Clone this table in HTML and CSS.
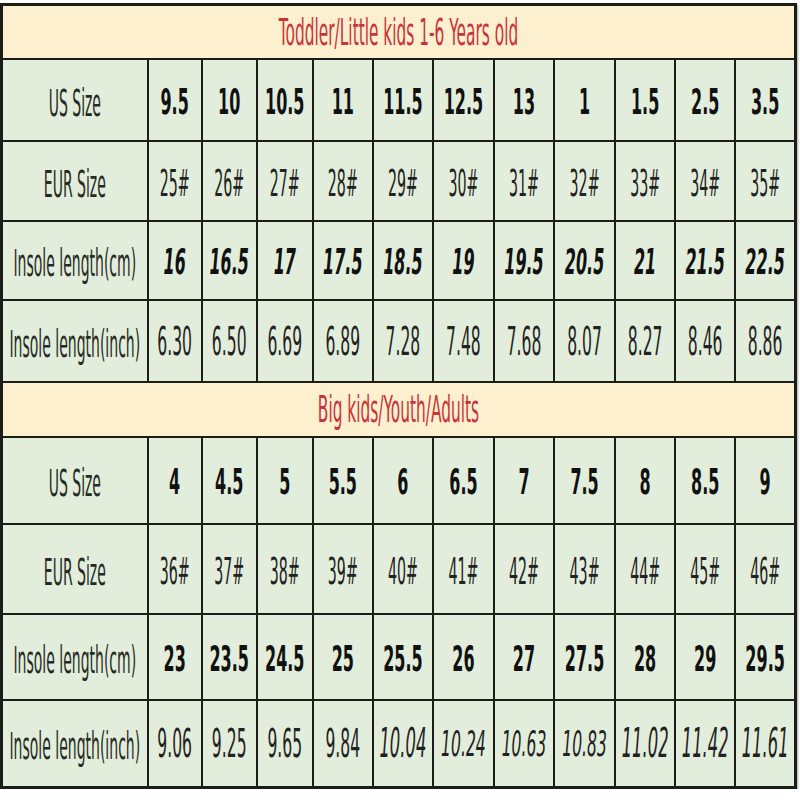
FILE: index.html
```html
<!DOCTYPE html>
<html>
<head>
<meta charset="utf-8">
<link rel="stylesheet" href="styles.css">
</head>
<body>
<table class="chart">
<colgroup>
<col class="c-label"><col class="c54"><col class="c55"><col class="c56"><col class="c60"><col class="c60"><col class="c61"><col class="c60"><col class="c61"><col class="c60"><col class="c60"><col class="c60">
</colgroup>
<tbody>
<tr class="r-title"><td colspan="12" class="title"><span class="t">Toddler/Little kids 1-6 Years old</span></td></tr>
<tr class="r82"><td class="lbl"><span class="t">US Size</span></td>
<td class="b"><span class="t">9.5</span></td><td class="b"><span class="t">10</span></td><td class="b"><span class="t">10.5</span></td><td class="b"><span class="t">11</span></td><td class="b"><span class="t">11.5</span></td><td class="b"><span class="t">12.5</span></td><td class="b"><span class="t">13</span></td><td class="b"><span class="t">1</span></td><td class="b"><span class="t">1.5</span></td><td class="b"><span class="t">2.5</span></td><td class="b"><span class="t">3.5</span></td></tr>
<tr class="r80"><td class="lbl"><span class="t">EUR Size</span></td>
<td class="e"><span class="t">25#</span></td><td class="e"><span class="t">26#</span></td><td class="e"><span class="t">27#</span></td><td class="e"><span class="t">28#</span></td><td class="e"><span class="t">29#</span></td><td class="e"><span class="t">30#</span></td><td class="e"><span class="t">31#</span></td><td class="e"><span class="t">32#</span></td><td class="e"><span class="t">33#</span></td><td class="e"><span class="t">34#</span></td><td class="e"><span class="t">35#</span></td></tr>
<tr class="r79"><td class="lbl"><span class="t">Insole length(cm)</span></td>
<td class="bi"><span class="t">16</span></td><td class="bi"><span class="t">16.5</span></td><td class="bi"><span class="t">17</span></td><td class="bi"><span class="t">17.5</span></td><td class="bi"><span class="t">18.5</span></td><td class="bi"><span class="t">19</span></td><td class="bi"><span class="t">19.5</span></td><td class="bi"><span class="t">20.5</span></td><td class="bi"><span class="t">21</span></td><td class="bi"><span class="t">21.5</span></td><td class="bi"><span class="t">22.5</span></td></tr>
<tr class="r82"><td class="lbl"><span class="t">Insole length(inch)</span></td>
<td class="n"><span class="t">6.30</span></td><td class="n"><span class="t">6.50</span></td><td class="n"><span class="t">6.69</span></td><td class="n"><span class="t">6.89</span></td><td class="n"><span class="t">7.28</span></td><td class="n"><span class="t">7.48</span></td><td class="n"><span class="t">7.68</span></td><td class="n"><span class="t">8.07</span></td><td class="n"><span class="t">8.27</span></td><td class="n"><span class="t">8.46</span></td><td class="n"><span class="t">8.86</span></td></tr>
<tr class="r-title2"><td colspan="12" class="title"><span class="t">Big kids/Youth/Adults</span></td></tr>
<tr class="r87"><td class="lbl"><span class="t">US Size</span></td>
<td class="b"><span class="t">4</span></td><td class="b"><span class="t">4.5</span></td><td class="b"><span class="t">5</span></td><td class="b"><span class="t">5.5</span></td><td class="b"><span class="t">6</span></td><td class="b"><span class="t">6.5</span></td><td class="b"><span class="t">7</span></td><td class="b"><span class="t">7.5</span></td><td class="b"><span class="t">8</span></td><td class="b"><span class="t">8.5</span></td><td class="b"><span class="t">9</span></td></tr>
<tr class="r90"><td class="lbl"><span class="t">EUR Size</span></td>
<td class="e"><span class="t">36#</span></td><td class="e"><span class="t">37#</span></td><td class="e"><span class="t">38#</span></td><td class="e"><span class="t">39#</span></td><td class="e"><span class="t">40#</span></td><td class="e"><span class="t">41#</span></td><td class="e"><span class="t">42#</span></td><td class="e"><span class="t">43#</span></td><td class="e"><span class="t">44#</span></td><td class="e"><span class="t">45#</span></td><td class="e"><span class="t">46#</span></td></tr>
<tr class="r86"><td class="lbl"><span class="t">Insole length(cm)</span></td>
<td class="b"><span class="t">23</span></td><td class="b"><span class="t">23.5</span></td><td class="b"><span class="t">24.5</span></td><td class="b"><span class="t">25</span></td><td class="b"><span class="t">25.5</span></td><td class="b"><span class="t">26</span></td><td class="b"><span class="t">27</span></td><td class="b"><span class="t">27.5</span></td><td class="b"><span class="t">28</span></td><td class="b"><span class="t">29</span></td><td class="b"><span class="t">29.5</span></td></tr>
<tr class="r88"><td class="lbl"><span class="t">Insole length(inch)</span></td>
<td class="n"><span class="t">9.06</span></td><td class="n"><span class="t">9.25</span></td><td class="n"><span class="t">9.65</span></td><td class="n"><span class="t">9.84</span></td><td class="ni"><span class="t">10.04</span></td><td class="ni sm"><span class="t">10.24</span></td><td class="ni sm"><span class="t">10.63</span></td><td class="ni sm"><span class="t">10.83</span></td><td class="ni"><span class="t">11.02</span></td><td class="ni"><span class="t">11.42</span></td><td class="ni"><span class="t">11.61</span></td></tr>
</tbody>
</table>
</body>
</html>
```

FILE: styles.css
```css
html, body {
  margin: 0;
  padding: 0;
  background: #ffffff;
}

.chart {
  margin: 3px 0 0 0;
  width: 797px;
  table-layout: fixed;
  border-collapse: collapse;
  border: 3px solid #1b1d18;
  box-shadow: 1px 2px 2px rgba(0, 0, 0, 0.35);
  font-family: "DejaVu Sans", Verdana, sans-serif;
  color: #1e1e1e;
}

.c-label { width: 146px; }
.c54 { width: 54px; }
.c55 { width: 55px; }
.c56 { width: 56px; }
.c60 { width: 60px; }
.c61 { width: 61px; }

.chart td {
  border: 2px solid #1b1d18;
  background: #e2eedb;
  text-align: center;
  vertical-align: middle;
  padding: 0;
  line-height: 16px;
  white-space: nowrap;
}

.r-title { height: 54px; }
.r-title2 { height: 55px; }
.r82 { height: 82px; }
.r80 { height: 80px; }
.r79 { height: 79px; }
.r87 { height: 87px; }
.r90 { height: 90px; }
.r86 { height: 86px; }
.r88 { height: 88px; }

.t {
  display: inline-block;
  transform-origin: 50% 50%;
}

.chart td.title {
  background: #fdf0cf;
  color: #c8343a;
  font-size: 15.4px;
}
.title .t { transform: translateY(1px) scaleY(2.4); }

.lbl {
  font-size: 14px;
  color: #262a24;
}
.lbl .t { transform: translateY(3px) scaleY(2.6); }

.b, .bi {
  font-size: 16px;
  font-weight: bold;
  color: #111;
}
.bi { font-style: italic; }
.b .t, .bi .t { transform: translateY(3px) scaleY(2.25); }

.e {
  font-size: 14.2px;
  color: #222;
}
.e .t { transform: translateY(2px) scaleY(2.6); }

.n, .ni {
  font-size: 15.6px;
  color: #222;
}
.ni { font-size: 16.4px; font-style: italic; }
.n .t, .ni .t { transform: translateY(2px) scaleY(2.45); }
.ni.sm { font-size: 15.6px; }
.ni.sm .t { transform: translateY(2px) scaleY(2.25); }
```
